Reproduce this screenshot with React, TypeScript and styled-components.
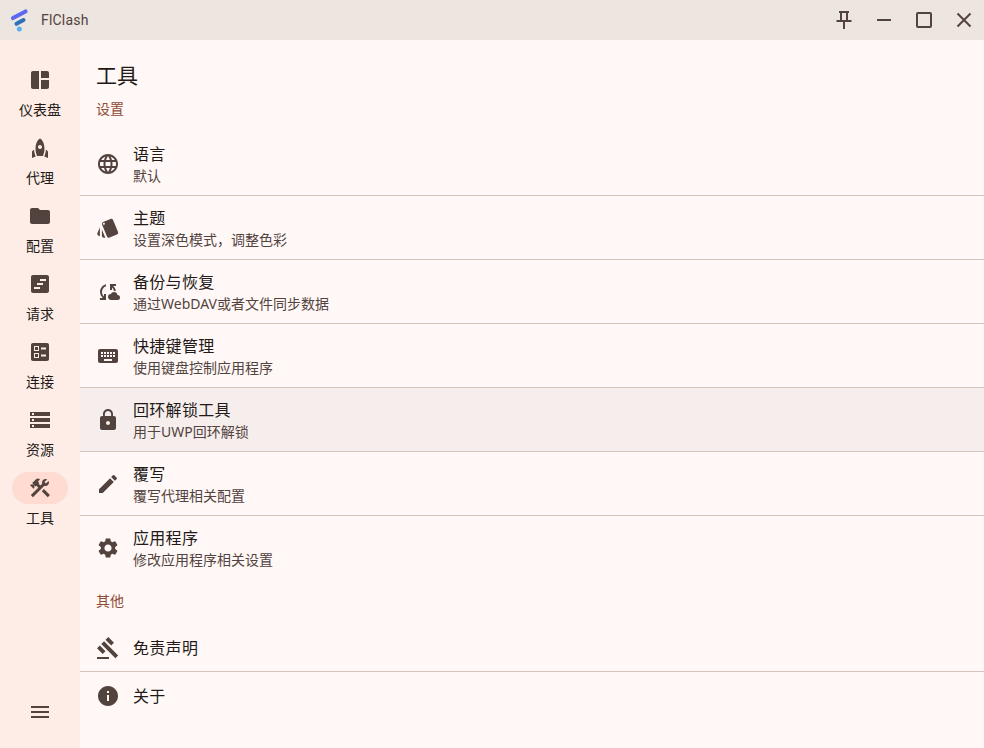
import React from "react";
import styled, { createGlobalStyle } from "styled-components";
import {
  MdBallot,
  MdCloudSync,
  MdConstruction,
  MdEdit,
  MdFolder,
  MdGavel,
  MdInfo,
  MdKeyboard,
  MdLanguage,
  MdLock,
  MdMenu,
  MdRocket,
  MdSettings,
  MdSpaceDashboard,
  MdStorage,
  MdStyle,
  MdViewTimeline
} from "react-icons/md";

type IconType = React.ComponentType<{ size?: number }>;

type NavEntry = { label: string; icon: IconType; active?: boolean };
type ToolEntry = { title: string; subtitle?: string; icon: IconType; hovered?: boolean };

const navEntries: NavEntry[] = [
  { label: "仪表盘", icon: MdSpaceDashboard },
  { label: "代理", icon: MdRocket },
  { label: "配置", icon: MdFolder },
  { label: "请求", icon: MdViewTimeline },
  { label: "连接", icon: MdBallot },
  { label: "资源", icon: MdStorage },
  { label: "工具", icon: MdConstruction, active: true }
];

const settingsEntries: ToolEntry[] = [
  { title: "语言", subtitle: "默认", icon: MdLanguage },
  { title: "主题", subtitle: "设置深色模式，调整色彩", icon: MdStyle },
  { title: "备份与恢复", subtitle: "通过WebDAV或者文件同步数据", icon: MdCloudSync },
  { title: "快捷键管理", subtitle: "使用键盘控制应用程序", icon: MdKeyboard },
  { title: "回环解锁工具", subtitle: "用于UWP回环解锁", icon: MdLock, hovered: true },
  { title: "覆写", subtitle: "覆写代理相关配置", icon: MdEdit },
  { title: "应用程序", subtitle: "修改应用程序相关设置", icon: MdSettings }
];

const otherEntries: ToolEntry[] = [
  { title: "免责声明", icon: MdGavel },
  { title: "关于", icon: MdInfo }
];

const ToolRow: React.FC<{ entry: ToolEntry; last: boolean }> = ({ entry, last }) => {
  const Icon = entry.icon;
  return (
    <Row $hovered={entry.hovered} $tall={!!entry.subtitle} $last={last}>
      <RowIcon>
        <Icon size={24} />
      </RowIcon>
      <RowText>
        <RowTitle>{entry.title}</RowTitle>
        {entry.subtitle && <RowSubtitle>{entry.subtitle}</RowSubtitle>}
      </RowText>
    </Row>
  );
};

const App: React.FC = () => {
  return (
    <Page>
      <GlobalStyle />
      <TitleBar>
        <Brand>
          <svg width="20" height="24" viewBox="0 0 20 24">
            <path d="M3 10 15.500 3.500" stroke="#5c67f2" strokeWidth="4.200" strokeLinecap="round" fill="none" />
            <path d="M6.500 15.800 13.500 12" stroke="#2f6fb8" strokeWidth="4" strokeLinecap="round" fill="none" />
            <circle cx="9.300" cy="21" r="2.500" fill="#5cb0f0" />
          </svg>
          <BrandName>FlClash</BrandName>
        </Brand>
        <WindowControls>
          <WindowButton>
            <svg width="18" height="20" viewBox="0 0 18 20" fill="none" stroke="currentColor" strokeWidth="2">
              <path d="M4 2h10M6 2v8M12 2v8M1.500 11h15M9 11v8" />
            </svg>
          </WindowButton>
          <WindowButton>
            <svg width="16" height="16" viewBox="0 0 16 16" fill="none" stroke="currentColor" strokeWidth="2">
              <path d="M1 8h14" />
            </svg>
          </WindowButton>
          <WindowButton>
            <svg width="18" height="18" viewBox="0 0 18 18" fill="none" stroke="currentColor" strokeWidth="2">
              <rect x="2" y="2" width="14" height="14" rx="1" />
            </svg>
          </WindowButton>
          <WindowButton>
            <svg width="18" height="18" viewBox="0 0 18 18" fill="none" stroke="currentColor" strokeWidth="2">
              <path d="M2.500 2.500l13 13M15.500 2.500l-13 13" />
            </svg>
          </WindowButton>
        </WindowControls>
      </TitleBar>
      <Body>
        <NavRail>
          <NavList>
            {navEntries.map(entry => {
              const Icon = entry.icon;
              return (
                <NavItem key={entry.label}>
                  <NavPill $active={entry.active}>
                    <Icon size={24} />
                  </NavPill>
                  <NavLabel>{entry.label}</NavLabel>
                </NavItem>
              );
            })}
          </NavList>
          <MenuButton>
            <MdMenu size={24} />
          </MenuButton>
        </NavRail>
        <Content>
          <Heading>工具</Heading>
          <SectionLabel>设置</SectionLabel>
          <RowList>
            {settingsEntries.map((entry, index) => (
              <ToolRow key={entry.title} entry={entry} last={index === settingsEntries.length - 1} />
            ))}
          </RowList>
          <SectionLabel>其他</SectionLabel>
          <RowList>
            {otherEntries.map((entry, index) => (
              <ToolRow key={entry.title} entry={entry} last={index === otherEntries.length - 1} />
            ))}
          </RowList>
        </Content>
      </Body>
    </Page>
  );
};

const GlobalStyle = createGlobalStyle`
  html, body {
    margin: 0;
    padding: 0;
    background: #fff8f6;
  }
  * {
    box-sizing: border-box;
  }
`;

const Page = styled.div`
  width: 984px;
  height: 748px;
  display: flex;
  flex-direction: column;
  overflow: hidden;
  font-family: "Noto Sans", "Noto Sans CJK SC", sans-serif;
  color: #231917;
`;

const TitleBar = styled.header`
  height: 40px;
  flex: none;
  display: flex;
  align-items: center;
  justify-content: space-between;
  background: #ede5e0;
`;

const Brand = styled.div`
  display: flex;
  align-items: center;
  gap: 11px;
  padding-left: 10px;
`;

const BrandName = styled.span`
  font-family: Roboto, sans-serif;
  font-size: 14px;
  letter-spacing: 0.2px;
  color: #53433f;
`;

const WindowControls = styled.div`
  display: flex;
`;

const WindowButton = styled.div`
  width: 40px;
  height: 40px;
  display: flex;
  align-items: center;
  justify-content: center;
  color: #53433f;
`;

const Body = styled.div`
  flex: 1;
  display: flex;
  min-height: 0;
`;

const NavRail = styled.nav`
  width: 80px;
  flex: none;
  display: flex;
  flex-direction: column;
  background: #fdede6;
`;

const NavList = styled.div`
  flex: 1;
  padding-top: 24px;
  display: flex;
  flex-direction: column;
`;

const NavItem = styled.div`
  height: 68px;
  display: flex;
  flex-direction: column;
  align-items: center;
`;

const NavPill = styled.div<{ $active?: boolean }>`
  width: 56px;
  height: 32px;
  display: flex;
  align-items: center;
  justify-content: center;
  border-radius: 16px;
  color: #53433f;
  background: ${p => (p.$active ? "#ffdbd1" : "transparent")};
`;

const NavLabel = styled.span`
  margin-top: 4px;
  font-size: 14px;
  line-height: 20px;
  color: #231917;
`;

const MenuButton = styled.div`
  height: 72px;
  flex: none;
  display: flex;
  justify-content: center;
  padding-top: 24px;
  color: #53433f;
`;

const Content = styled.main`
  flex: 1;
  min-width: 0;
  display: flex;
  flex-direction: column;
  background: #fff8f6;
`;

const Heading = styled.h1`
  margin: 0;
  padding: 21px 16px 0;
  font-size: 21px;
  line-height: 28px;
  font-weight: 400;
  color: #231917;
`;

const SectionLabel = styled.div`
  padding: 10px 16px 0;
  font-size: 14px;
  line-height: 20px;
  color: #8f4c38;
`;

const RowList = styled.div`
  display: flex;
  flex-direction: column;
  padding-top: 13px;
  padding-bottom: 1px;
`;

const Row = styled.div<{ $hovered?: boolean; $tall: boolean; $last: boolean }>`
  height: ${p => (p.$tall ? "64px" : "48px")};
  display: flex;
  align-items: center;
  gap: 12px;
  padding-left: 16px;
  padding-top: 1px;
  background: ${p => (p.$hovered ? "#f5eeec" : "transparent")};
  border-bottom: 1px solid ${p => (p.$last ? "transparent" : "#d8c2bc")};
`;

const RowIcon = styled.div`
  width: 24px;
  height: 24px;
  display: flex;
  margin-top: -1px;
  color: #53433f;
`;

const RowText = styled.div`
  display: flex;
  flex-direction: column;
  padding-left: 1px;
`;

const RowTitle = styled.div`
  font-size: 16px;
  line-height: 22px;
  letter-spacing: 0.3px;
  color: #231917;
`;

const RowSubtitle = styled.div`
  margin-top: 1px;
  font-size: 14px;
  line-height: 20px;
  color: #53433f;
`;

export default App;
